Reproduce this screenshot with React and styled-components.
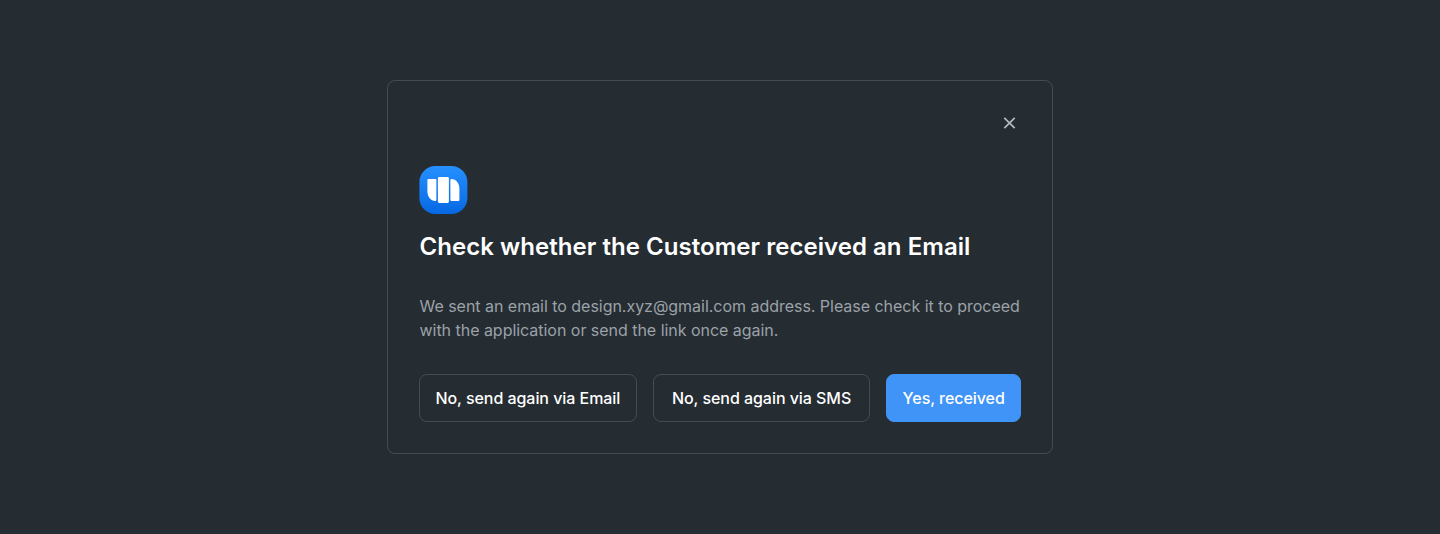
import React from "react";
import styled, { createGlobalStyle } from "styled-components";

const GlobalStyle = createGlobalStyle`
  *, *::before, *::after { box-sizing: border-box; }
  body {
    margin: 0;
    background: #252c32;
    font-family: Inter, "Liberation Sans", sans-serif;
  }
`;

const Page = styled.main`
  display: flex;
  align-items: center;
  justify-content: center;
  min-height: 100vh;
`;

const Dialog = styled.section`
  display: flex;
  flex-direction: column;
  width: 666px;
  height: 374px;
  padding: 31px;
  border: 1px solid #444d54;
  border-radius: 8px;
`;

const CloseButton = styled.button`
  display: flex;
  align-self: flex-end;
  align-items: center;
  justify-content: center;
  width: 22px;
  height: 22px;
  padding: 0;
  border: 0;
  background: none;
  color: #b0b8bf;
`;

const Logo = styled.svg`
  display: block;
  width: 49px;
  height: 48px;
  margin-top: 32px;
`;

const Title = styled.h1`
  margin: 17px 0 0;
  padding-left: 0.6px;
  color: #fff;
  font-size: 24px;
  font-weight: 600;
  line-height: 32px;
  letter-spacing: 0.04px;
  white-space: nowrap;
`;

const Message = styled.p`
  margin: 31px 0 0;
  padding-left: 0.5px;
  color: #9ba2a8;
  font-size: 16px;
  line-height: 24px;
  letter-spacing: -0.03px;
`;

const Actions = styled.div`
  display: flex;
  gap: 16px;
  margin-top: 32px;
`;

const Button = styled.button`
  flex: ${({ $primary }) => ($primary ? "0 0 134.6px" : "1 1 0")};
  height: 48px;
  padding: 0;
  border: 1px solid ${({ $primary }) => ($primary ? "#4094f7" : "#444d54")};
  border-radius: 8px;
  background: ${({ $primary }) => ($primary ? "#4094f7" : "transparent")};
  color: #fff;
  font: 500 16px/24px Inter, "Liberation Sans", sans-serif;
  letter-spacing: -0.05px;
  white-space: nowrap;
`;

function BrandLogo() {
  return (
    <Logo viewBox="0 0 49 48" aria-hidden="true">
      <defs>
        <linearGradient id="brand" x1="0" y1="0" x2="0" y2="1">
          <stop offset="0" stopColor="#2690ff" />
          <stop offset="1" stopColor="#0768e2" />
        </linearGradient>
      </defs>
      <rect x="0.4" width="48" height="48" rx="16" fill="url(#brand)" />
      <g fill="#fff" transform="translate(0.4 0)">
        <path d="M9 13H16Q17 13 17 14V34Q17 35 16 35C11 35 8 30.5 8 25V14Q8 13 9 13Z" />
        <rect x="18.5" y="11" width="11" height="26" rx="1.4" />
        <path d="M32 13C37 13 40 17.5 40 23V34Q40 35 39 35H32Q31 35 31 34V14Q31 13 32 13Z" />
      </g>
    </Logo>
  );
}

export default function App() {
  return (
    <>
      <GlobalStyle />
      <Page>
        <Dialog role="dialog" aria-labelledby="dialog-title">
          <CloseButton aria-label="Close">
            <svg width="22" height="22" viewBox="0 0 22 22" fill="none" stroke="currentColor" strokeWidth="1.8">
              <path d="M5.3 5.8L15.7 16.2M15.7 5.8L5.3 16.2" />
            </svg>
          </CloseButton>
          <BrandLogo />
          <Title id="dialog-title">Check whether the Customer received an Email</Title>
          <Message>
            We sent an email to design.xyz@gmail.com address. Please check it to proceed with the
            application or send the link once again.
          </Message>
          <Actions>
            <Button>No, send again via Email</Button>
            <Button>No, send again via SMS</Button>
            <Button $primary>Yes, received</Button>
          </Actions>
        </Dialog>
      </Page>
    </>
  );
}
